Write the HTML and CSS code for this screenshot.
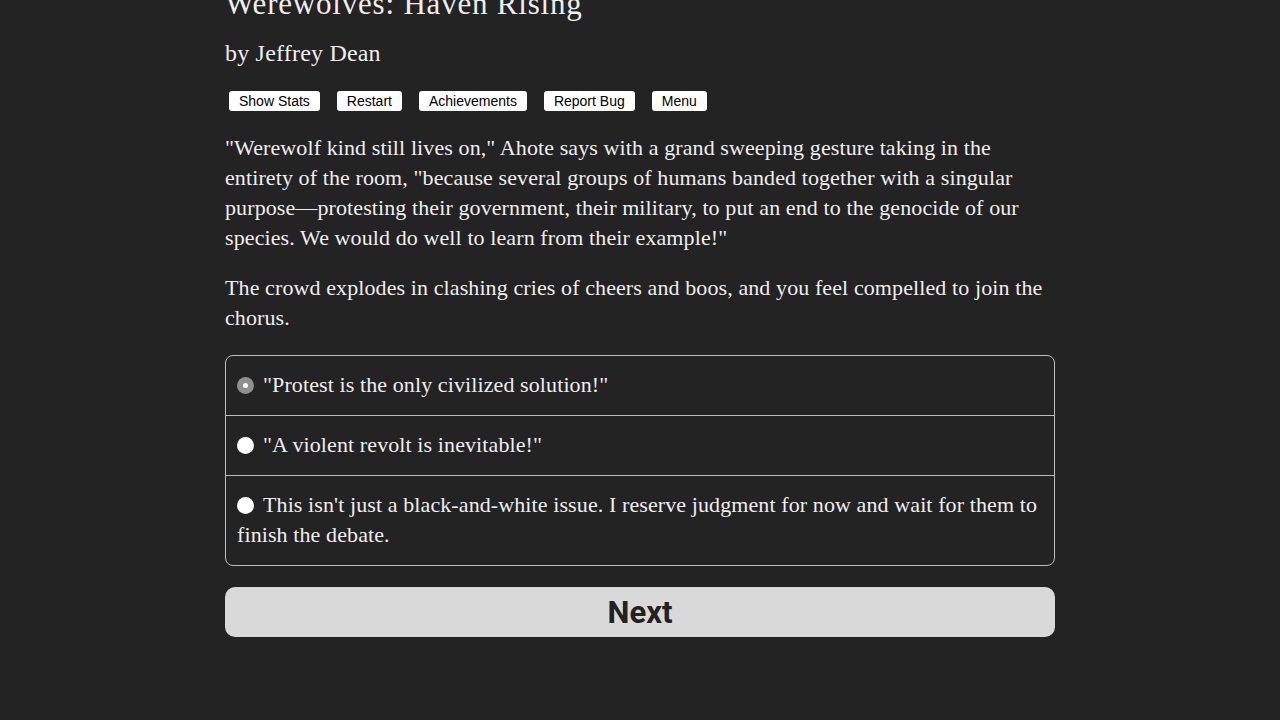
FILE: index.html
```html
<!DOCTYPE html>
<html>
<head>
<meta charset="utf-8">
<link rel="stylesheet" href="styles.css">
</head>
<body>
<div class="page">
  <h1 class="title">Werewolves: Haven Rising</h1>
  <h2 class="author">by Jeffrey Dean</h2>
  <div class="toolbar">
    <button class="tb">Show Stats</button>
    <button class="tb">Restart</button>
    <button class="tb">Achievements</button>
    <button class="tb">Report Bug</button>
    <button class="tb">Menu</button>
  </div>
  <p class="para">"Werewolf kind still lives on," Ahote says with a grand sweeping gesture taking in the entirety of the room, "because several groups of humans banded together with a singular purpose—protesting their government, their military, to put an end to the genocide of our species. We would do well to learn from their example!"</p>
  <p class="para">The crowd explodes in clashing cries of cheers and boos, and you feel compelled to join the chorus.</p>
  <div class="choices">
    <div class="choice"><span class="radio checked"></span>"Protest is the only civilized solution!"</div>
    <div class="choice"><span class="radio"></span>"A violent revolt is inevitable!"</div>
    <div class="choice"><span class="radio"></span>This isn't just a black-and-white issue. I reserve judgment for now and wait for them to finish the debate.</div>
  </div>
  <button class="next">Next</button>
</div>
</body>
</html>
```

FILE: styles.css
```css
html, body {
  margin: 0;
  padding: 0;
  background: #232323;
}
body {
  color: #eeeeee;
  font-family: "Liberation Serif", "DejaVu Serif", serif;
  height: 720px;
  overflow: hidden;
}
.page {
  width: 830px;
  margin: 0 auto;
}
.title {
  font-size: 31px;
  font-weight: normal;
  margin: -14px 0 0 0;
  line-height: 36px;
  letter-spacing: 0.8px;
}
.author {
  font-size: 24px;
  font-weight: normal;
  margin: 16px 0 0 0;
  line-height: 30px;
  letter-spacing: 0.2px;
}
.toolbar {
  margin-top: 23px;
  display: flex;
  gap: 17px;
  padding-left: 4px;
}
.tb {
  font-family: "Liberation Sans", Arial, sans-serif;
  font-size: 14px;
  background: #ffffff;
  color: #000;
  border: none;
  border-radius: 3px;
  height: 20px;
  padding: 0 10px;
  line-height: 20px;
}
.para {
  font-size: 22px;
  line-height: 30px;
  margin: 22px 0 0 0;
  letter-spacing: 0.1px;
}
.para + .para {
  margin-top: 20px;
}
.choices {
  margin-top: 22px;
  border: 1px solid #bdbdbd;
  border-radius: 8px;
}
.choice {
  font-size: 22px;
  line-height: 30px;
  padding: 14px 11px 15px 11px;
  letter-spacing: 0.1px;
}
.choice + .choice {
  border-top: 1px solid #bdbdbd;
}
.radio {
  display: inline-block;
  width: 17px;
  height: 17px;
  border-radius: 50%;
  background: #ffffff;
  vertical-align: -2px;
  margin-right: 9px;
  box-sizing: border-box;
}
.radio.checked {
  background: #8f8f8f;
  position: relative;
}
.radio.checked::after {
  content: "";
  position: absolute;
  left: 6px;
  top: 6px;
  width: 5px;
  height: 5px;
  border-radius: 50%;
  background: #fff;
}
.next {
  display: block;
  width: 830px;
  margin-top: 21px;
  height: 50px;
  border: none;
  border-radius: 10px;
  background: #d9d9d9;
  color: #222;
  font-family: Roboto, "Liberation Sans", sans-serif;
  font-weight: bold;
  font-size: 31px;
}
```
